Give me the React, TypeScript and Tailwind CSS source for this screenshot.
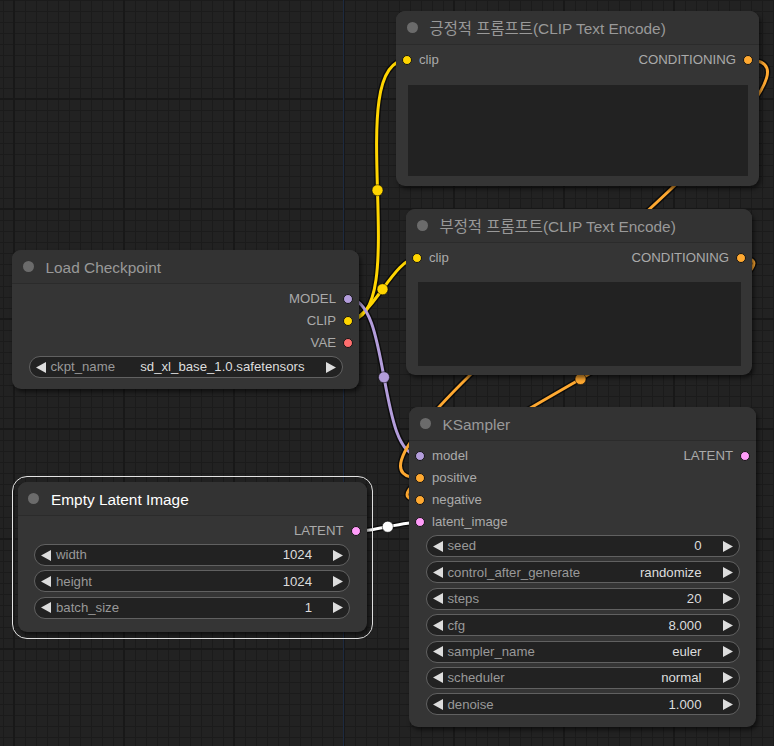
import React from "react";

type P = [number, number];

const FONT = "[font-family:'Liberation_Sans','Noto_Sans_CJK_KR',Arial,sans-serif]";

const C = {
  clip: "#FFD500",
  model: "#B39DDB",
  vae: "#FF6E6E",
  cond: "#FFA931",
  latent: "#FF9CF9",
};

function Dot({ color }: { color: string }) {
  return (
    <span
      className="block w-[10px] h-[10px] rounded-full border border-[#151515] shrink-0"
      style={{ backgroundColor: color }}
    />
  );
}

function Title({ text, selected }: { text: string; selected?: boolean }) {
  return (
    <div className="h-[34px] flex items-center bg-[#333] border-b border-[#2b2b2b] rounded-t-[9px] pl-[10.5px]">
      <span className="block w-[11px] h-[11px] rounded-full bg-[#6b6b6b] shrink-0" />
      <span
        className={`ml-[12px] text-[15.4px] leading-none pt-[2px] whitespace-nowrap ${
          selected ? "text-white" : "text-[#999]"
        }`}
      >
        {text}
      </span>
    </div>
  );
}

function SlotRow({
  input,
  output,
}: {
  input?: { label: string; color: string };
  output?: { label: string; color: string };
}) {
  return (
    <div className="h-[22px] flex items-center justify-between px-[6px] text-[13.2px] text-[#aaa] leading-none">
      <div className="flex items-center gap-[7px]">
        {input && (
          <>
            <Dot color={input.color} />
            <span>{input.label}</span>
          </>
        )}
      </div>
      <div className="flex items-center gap-[7px]">
        {output && (
          <>
            <span>{output.label}</span>
            <Dot color={output.color} />
          </>
        )}
      </div>
    </div>
  );
}

function Arrow({ dir }: { dir: "l" | "r" }) {
  return (
    <svg width="10" height="11" viewBox="0 0 10 11" className="shrink-0">
      {dir === "l" ? (
        <path d="M10 0 L0 5.5 L10 11 Z" fill="#ddd" />
      ) : (
        <path d="M0 0 L10 5.5 L0 11 Z" fill="#ddd" />
      )}
    </svg>
  );
}

function Widget({ label, value }: { label: string; value: string }) {
  return (
    <div className="h-[22px] rounded-full border border-[#616161] bg-[#222] flex items-center pl-[6px] pr-[6px] text-[13.2px] leading-none">
      <Arrow dir="l" />
      <span className="ml-[5px] text-[#999] whitespace-nowrap">{label}</span>
      <span className="flex-1 text-right text-[#ddd] whitespace-nowrap mr-[21px]">{value}</span>
      <Arrow dir="r" />
    </div>
  );
}

function NodeBox({
  left,
  top,
  width,
  children,
  className = "",
}: {
  left: number;
  top: number;
  width: number;
  children: React.ReactNode;
  className?: string;
}) {
  return (
    <div
      className={`absolute bg-[#353535] rounded-[9px] shadow-[2px_3px_4px_rgba(0,0,0,0.55)] ${className}`}
      style={{ left, top, width }}
    >
      {children}
    </div>
  );
}

function wirePath(a: P, b: P) {
  const dist = Math.hypot(b[0] - a[0], b[1] - a[1]) * 0.25;
  const c1: P = [a[0] + dist, a[1]];
  const c2: P = [b[0] - dist, b[1]];
  const mid: P = [
    (a[0] + 3 * c1[0] + 3 * c2[0] + b[0]) / 8,
    (a[1] + 3 * c1[1] + 3 * c2[1] + b[1]) / 8,
  ];
  return {
    d: `M${a[0]} ${a[1]} C${c1[0]} ${c1[1]} ${c2[0]} ${c2[1]} ${b[0]} ${b[1]}`,
    mid,
  };
}

const wires: { a: P; b: P; color: string }[] = [
  { a: [348, 320.5], b: [407, 60], color: C.clip },
  { a: [348, 320.5], b: [417, 258], color: C.clip },
  { a: [348, 298.5], b: [420, 456], color: C.model },
  { a: [748, 60], b: [420, 478], color: C.cond },
  { a: [741, 258], b: [420, 500], color: C.cond },
  { a: [355.5, 531.5], b: [420, 522], color: "#ffffff" },
];

export default function App() {
  return (
    <div
      className={`relative w-[774px] h-[746px] overflow-hidden bg-[#222] ${FONT} [background-image:linear-gradient(to_right,#181818_2px,transparent_2px),linear-gradient(to_bottom,#181818_2px,transparent_2px),linear-gradient(to_right,#1b1b1b_1px,transparent_1px),linear-gradient(to_bottom,#1b1b1b_1px,transparent_1px)] [background-size:110px_110px,110px_110px,11px_11px,11px_11px] [background-position:13px_0,0_98px,3px_0,0_0]`}
    >
      {/* origin axis line */}
      <div className="absolute top-0 bottom-0 left-[343px] w-px bg-[#1d2a40]" />

      {/* links */}
      <svg className="absolute inset-0" width="774" height="746">
        {wires.map((w, i) => {
          const { d } = wirePath(w.a, w.b);
          return (
            <path key={"b" + i} d={d} fill="none" stroke="rgba(0,0,0,0.6)" strokeWidth={6} />
          );
        })}
        {wires.map((w, i) => {
          const { d, mid } = wirePath(w.a, w.b);
          return (
            <g key={"w" + i}>
              <path d={d} fill="none" stroke={w.color} strokeWidth={3} />
              <circle cx={mid[0]} cy={mid[1]} r={5.5} fill={w.color} stroke="rgba(0,0,0,0.5)" strokeWidth={1} />
            </g>
          );
        })}
      </svg>

      {/* Positive prompt */}
      <NodeBox left={396} top={11} width={363}>
        <Title text="긍정적 프롬프트(CLIP Text Encode)" />
        <div className="pt-[4px]">
          <SlotRow input={{ label: "clip", color: C.clip }} output={{ label: "CONDITIONING", color: C.cond }} />
        </div>
        <div className="mt-[14px] mx-[11.5px] mb-[10px] h-[91px] bg-[#222]" />
      </NodeBox>

      {/* Negative prompt */}
      <NodeBox left={406} top={209} width={346}>
        <Title text="부정적 프롬프트(CLIP Text Encode)" />
        <div className="pt-[4px]">
          <SlotRow input={{ label: "clip", color: C.clip }} output={{ label: "CONDITIONING", color: C.cond }} />
        </div>
        <div className="mt-[13px] ml-[12px] mr-[11px] mb-[9px] h-[84px] bg-[#222]" />
      </NodeBox>

      {/* Load Checkpoint */}
      <NodeBox left={12} top={250} width={347}>
        <Title text="Load Checkpoint" />
        <div className="pt-[4px]">
          <SlotRow output={{ label: "MODEL", color: C.model }} />
          <SlotRow output={{ label: "CLIP", color: C.clip }} />
          <SlotRow output={{ label: "VAE", color: C.vae }} />
        </div>
        <div className="mt-[2px] px-[16.5px] pb-[11px] flex flex-col gap-[4.4px]">
          <Widget label="ckpt_name" value="sd_xl_base_1.0.safetensors" />
        </div>
      </NodeBox>

      {/* Empty Latent Image (selected) */}
      <div className="absolute left-[11.5px] top-[476px] w-[361px] h-[163px] rounded-[15px] border-[1.5px] border-[#e4e4e4]" />
      <NodeBox left={17.5} top={482} width={349}>
        <Title text="Empty Latent Image" selected />
        <div className="pt-[4px]">
          <SlotRow output={{ label: "LATENT", color: C.latent }} />
        </div>
        <div className="mt-[2px] px-[16.5px] pb-[13px] flex flex-col gap-[4.4px]">
          <Widget label="width" value="1024" />
          <Widget label="height" value="1024" />
          <Widget label="batch_size" value="1" />
        </div>
      </NodeBox>

      {/* KSampler */}
      <NodeBox left={409} top={407} width={347}>
        <Title text="KSampler" />
        <div className="pt-[4px]">
          <SlotRow input={{ label: "model", color: C.model }} output={{ label: "LATENT", color: C.latent }} />
          <SlotRow input={{ label: "positive", color: C.cond }} />
          <SlotRow input={{ label: "negative", color: C.cond }} />
          <SlotRow input={{ label: "latent_image", color: C.latent }} />
        </div>
        <div className="mt-[2px] px-[16.5px] pb-[12px] flex flex-col gap-[4.4px]">
          <Widget label="seed" value="0" />
          <Widget label="control_after_generate" value="randomize" />
          <Widget label="steps" value="20" />
          <Widget label="cfg" value="8.000" />
          <Widget label="sampler_name" value="euler" />
          <Widget label="scheduler" value="normal" />
          <Widget label="denoise" value="1.000" />
        </div>
      </NodeBox>
    </div>
  );
}
